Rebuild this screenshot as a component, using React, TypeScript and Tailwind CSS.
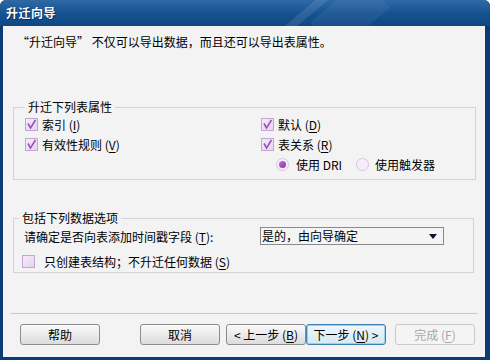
import React from "react";

const F = { fontFamily: '"Noto Sans CJK SC", "Liberation Sans", sans-serif' };

function U({ c }: { c: string }) {
  return <span className="underline underline-offset-2">{c}</span>;
}

function Check({ checked }: { checked: boolean }) {
  return (
    <span className="flex h-[13px] w-[13px] shrink-0 items-center justify-center border border-[#c3a6d6] bg-gradient-to-br from-[#f4ebf8] to-[#e6d4ef]">
      {checked && (
        <svg width="11" height="11" viewBox="0 0 11 11">
          <path d="M2 4.5 L4.5 9 L9.5 1" fill="none" stroke="#9b4fb8" strokeWidth="1.6" />
        </svg>
      )}
    </span>
  );
}

function Radio({ checked }: { checked: boolean }) {
  return (
    <span className="flex h-[13px] w-[13px] shrink-0 items-center justify-center rounded-full border border-[#d8c6e4] bg-[#f6eefa]">
      {checked && <span className="h-[7px] w-[7px] rounded-full bg-gradient-to-br from-[#c070d8] to-[#8a2fa8]" />}
    </span>
  );
}

function Btn({ children, variant }: { children: React.ReactNode; variant?: "default" | "disabled" }) {
  const base = "flex h-[21px] w-[80px] items-center justify-center rounded-[3px] text-[12px] leading-none";
  if (variant === "default")
    return (
      <div className={base + " border border-[#3c7fb1] bg-gradient-to-b from-[#eef7fc] to-[#d6e9f4] text-black shadow-[inset_0_0_0_1px_#9fd0ea]"}>
        {children}
      </div>
    );
  if (variant === "disabled")
    return <div className={base + " border border-[#c9c9c9] bg-[#f4f4f4] text-[#a8a8a8]"}>{children}</div>;
  return (
    <div className={base + " border border-[#8c8c8c] bg-gradient-to-b from-[#fafafa] to-[#dcdcdc] text-black"}>{children}</div>
  );
}

export default function App() {
  return (
    <div className="flex h-[360px] w-[490px] flex-col overflow-hidden rounded-t-[6px] bg-[#0c3b74] text-[12px] text-black" style={F}>
      {/* Title bar */}
      <div className="relative flex h-[26px] shrink-0 items-center overflow-hidden bg-gradient-to-b from-[#2f6aa6] via-[#165391] to-[#0f4783] pl-[6px]">
        <div className="absolute left-[300px] top-[-20px] h-[70px] w-[8px] rotate-[50deg] bg-white/10" />
        <div className="absolute left-[330px] top-[-20px] h-[70px] w-[40px] rotate-[50deg] bg-white/5" />
        <span className="relative text-[12px] font-bold tracking-[0.5px] text-white [text-shadow:1px_1px_0_#0a2a55]">升迁向导</span>
      </div>
      {/* Body */}
      <div className="mb-[3px] ml-[3px] mr-[5px] flex flex-1 flex-col bg-[#f3f3f3]">
        <div className="pl-[14px] pt-[8px] leading-[16px]">“升迁向导” 不仅可以导出数据，而且还可以导出表属性。</div>

        <fieldset className="ml-[10px] mr-[9px] mt-[50px] h-[80px] border border-[#d4d4d4] pl-[11px] pr-0">
          <legend className="px-[3px] leading-[14px]">升迁下列表属性</legend>
          <div className="flex">
            <div className="flex w-[236px] flex-col gap-[7px] pt-[4px]">
              <div className="flex items-center gap-[4px]">
                <Check checked />
                <span className="leading-[13px]">索引 (<U c="I" />)</span>
              </div>
              <div className="flex items-center gap-[4px]">
                <Check checked />
                <span className="leading-[13px]">有效性规则 (<U c="V" />)</span>
              </div>
            </div>
            <div className="flex flex-col gap-[7px] pt-[4px]">
              <div className="flex items-center gap-[4px]">
                <Check checked />
                <span className="leading-[13px]">默认 (<U c="D" />)</span>
              </div>
              <div className="flex items-center gap-[4px]">
                <Check checked />
                <span className="leading-[13px]">表关系 (<U c="R" />)</span>
              </div>
              <div className="flex items-center pl-[15px]">
                <Radio checked />
                <span className="ml-[7px] leading-[13px]">使用 DRI</span>
                <span className="ml-[14px]"><Radio checked={false} /></span>
                <span className="ml-[6px] leading-[13px]">使用触发器</span>
              </div>
            </div>
          </div>
        </fieldset>

        <fieldset className="ml-[10px] mr-[11px] mt-[31px] h-[62px] border border-[#d4d4d4] pl-[5px] pr-0">
          <legend className="px-[3px] leading-[14px]">包括下列数据选项</legend>
          <div className="flex items-center pl-[5px] pt-[2px]">
            <span className="w-[236px] leading-[13px]">请确定是否向表添加时间戳字段 (<U c="T" />):</span>
            <div className="flex h-[18px] w-[184px] items-center justify-between border border-[#8a8a8a] bg-[#f4f4f4] pl-[1px] pr-[6px] leading-none">
              <span>是的，由向导确定</span>
              <svg width="8" height="5" viewBox="0 0 8 5"><path d="M0 0 H8 L4 5 Z" fill="#101030" /></svg>
            </div>
          </div>
          <div className="mt-[10px] flex items-center pl-[3px]">
            <Check checked={false} />
            <span className="ml-[9px] leading-[13px]">只创建表结构；不升迁任何数据 (<U c="S" />)</span>
          </div>
        </fieldset>

        <div className="mx-[7px] mt-[40px] h-px bg-[#c8c8c8]" />
        <div className="flex items-center pl-[17px] pt-[10px]">
          <Btn>帮助</Btn>
          <div className="ml-[40px]"><Btn>取消</Btn></div>
          <div className="ml-[6px]"><Btn>&lt; 上一步 (<U c="B" />)</Btn></div>
          <Btn variant="default">下一步 (<U c="N" />) &gt;</Btn>
          <div className="ml-[9px]"><Btn variant="disabled">完成 (<U c="F" />)</Btn></div>
        </div>
      </div>
    </div>
  );
}
